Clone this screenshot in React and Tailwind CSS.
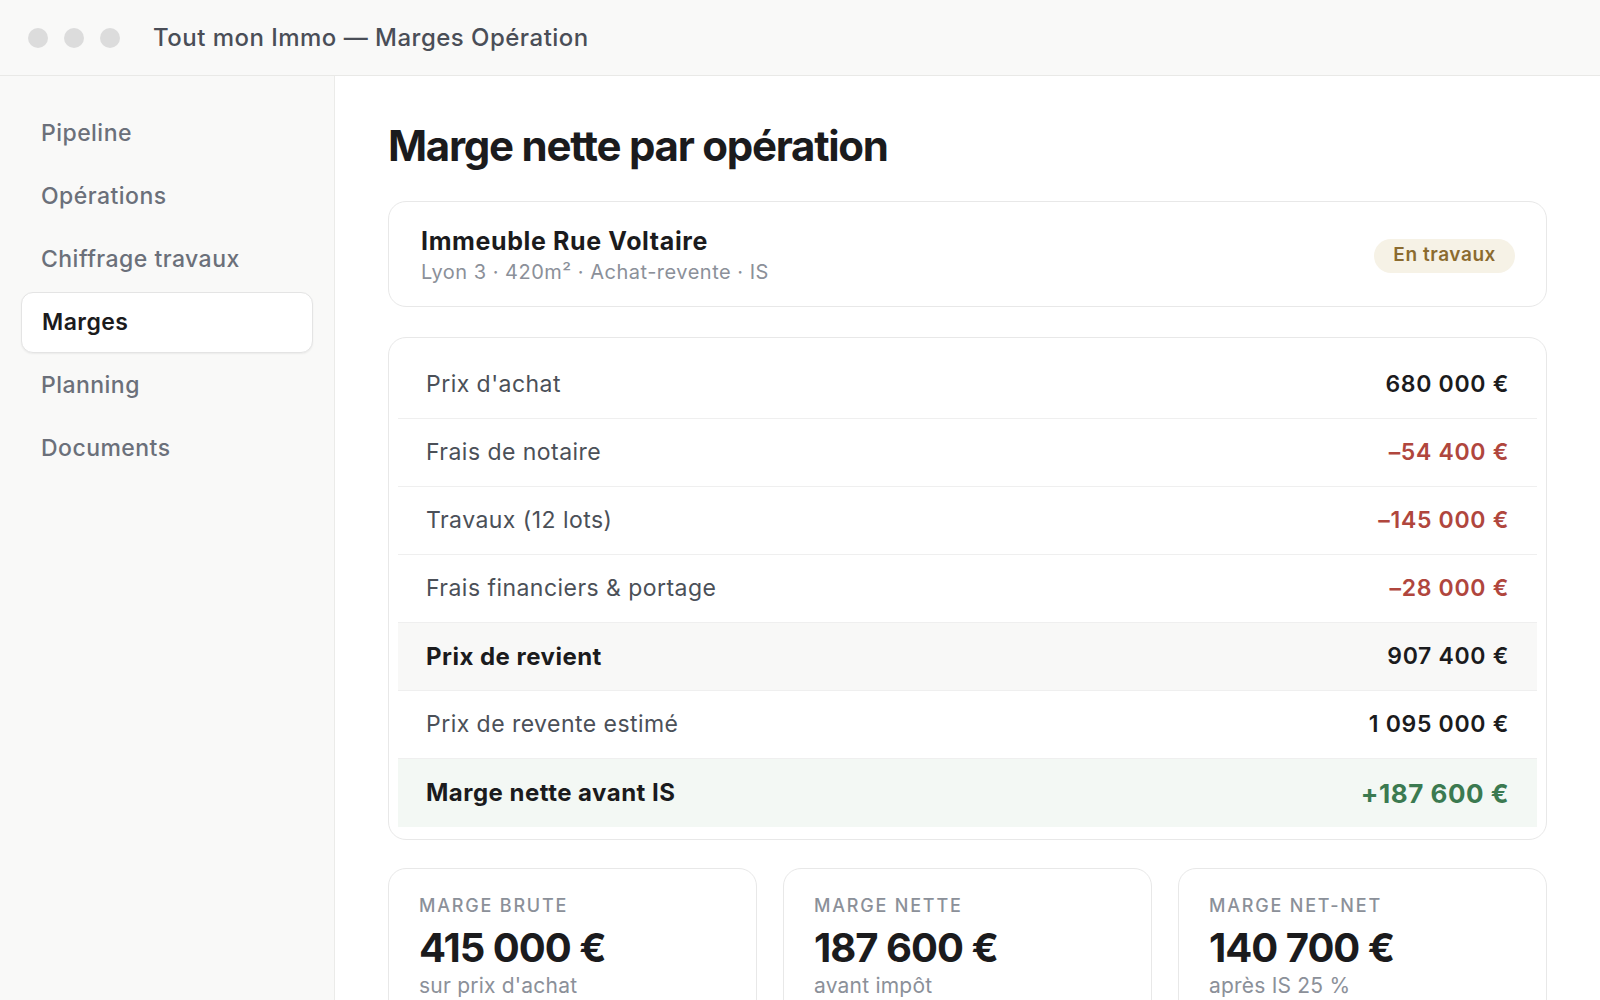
import React from "react";

const nav = ["Pipeline", "Opérations", "Chiffrage travaux", "Marges", "Planning", "Documents"];

const rows = [
  { label: "Prix d'achat", value: "680 000 €", tone: "normal" },
  { label: "Frais de notaire", value: "–54 400 €", tone: "neg" },
  { label: "Travaux (12 lots)", value: "–145 000 €", tone: "neg" },
  { label: "Frais financiers & portage", value: "–28 000 €", tone: "neg" },
  { label: "Prix de revient", value: "907 400 €", tone: "total" },
  { label: "Prix de revente estimé", value: "1 095 000 €", tone: "normal" },
  { label: "Marge nette avant IS", value: "+187 600 €", tone: "result" },
];

const kpis = [
  { label: "Marge brute", value: "415 000 €", sub: "sur prix d'achat" },
  { label: "Marge nette", value: "187 600 €", sub: "avant impôt" },
  { label: "Marge net-net", value: "140 700 €", sub: "après IS 25 %" },
];

export default function App() {
  return (
    <div className="w-[1600px] h-[1000px] overflow-hidden bg-white flex flex-col font-['Inter',sans-serif]">
      <div className="h-[76px] shrink-0 border-b border-[#e9e9e7] bg-[#f9f9f8] flex items-center px-[28px]">
        <div className="flex gap-[16px]">
          <span className="w-5 h-5 rounded-full bg-[#dcdcdc]" />
          <span className="w-5 h-5 rounded-full bg-[#dcdcdc]" />
          <span className="w-5 h-5 rounded-full bg-[#dcdcdc]" />
        </div>
        <div className="ml-[33px] text-[24px] tracking-[0.02em] font-medium text-[#4a4e57]">Tout mon Immo — Marges Opération</div>
      </div>
      <div className="flex flex-1 min-h-0">
        <aside className="w-[335px] shrink-0 bg-[#f9f9f8] border-r border-[#ebebe9] pt-[27px] px-[21px] flex flex-col gap-[2px]">
          {nav.map((n) =>
            n === "Marges" ? (
              <div key={n} className="h-[61px] px-[20px] flex items-center rounded-[12px] bg-white border border-[#e4e4e4] shadow-[0_1px_2px_rgba(0,0,0,0.06)] text-[23px] tracking-[0.02em] font-semibold text-[#1b1b1d]">
                {n}
              </div>
            ) : (
              <div key={n} className="h-[61px] px-[20px] flex items-center text-[23px] tracking-[0.02em] font-medium text-[#6b707a]">
                {n}
              </div>
            )
          )}
        </aside>
        <main className="flex-1 min-w-0 px-[53px] pt-[45px]">
          <h1 className="text-[42px] leading-[50px] font-bold tracking-[-0.03em] text-[#1b1b1d]">Marge nette par opération</h1>
          <div className="mt-[30px] h-[106px] border border-[#e8e8e8] rounded-[18px] pl-[32px] pr-[31px] pt-[3px] flex items-center justify-between">
            <div className="flex flex-col gap-[3px]">
              <div className="text-[25px] leading-[30px] tracking-[0.025em] font-bold text-[#1b1b1d]">Immeuble Rue Voltaire</div>
              <div className="text-[20px] leading-[26px] tracking-[0.025em] text-[#8b9099]">Lyon 3 · 420m² · Achat-revente · IS</div>
            </div>
            <span className="h-[34px] px-[19px] rounded-full bg-[#f6f2e6] text-[#8b6b2f] text-[19px] tracking-[0.03em] font-semibold flex items-center">En travaux</span>
          </div>
          <div className="mt-[30px] border border-[#e8e8e8] rounded-[18px] px-[9px] pt-[13px] pb-[12px]">
            {rows.map((r, i) => {
              const last = i === rows.length - 1;
              const bg = r.tone === "total" ? "bg-[#f8f8f7]" : r.tone === "result" ? "bg-[#f3f8f4]" : "";
              const labelCls =
                r.tone === "total" || r.tone === "result"
                  ? "text-[24px] tracking-[0.02em] font-bold text-[#1b1b1d]"
                  : "text-[23px] tracking-[0.02em] text-[#4b5058]";
              const valueCls =
                r.tone === "neg"
                  ? "text-[23px] tracking-[0.03em] font-semibold text-[#b0463d]"
                  : r.tone === "result"
                  ? "text-[26px] tracking-[0.02em] font-bold text-[#3b7a50]"
                  : "text-[23px] tracking-[0.03em] font-semibold text-[#1b1b1d]";
              return (
                <div key={r.label} className={`h-[68px] pl-[28px] pr-[28px] flex items-center justify-between ${last ? "" : "border-b border-[#efefef]"} ${bg}`}>
                  <span className={labelCls}>{r.label}</span>
                  <span className={valueCls}>{r.value}</span>
                </div>
              );
            })}
          </div>
          <div className="mt-[28px] grid grid-cols-3 gap-[26px]">
            {kpis.map((k) => (
              <div key={k.label} className="h-[200px] border border-[#e8e8e8] rounded-[18px] px-[30px] pt-[25px]">
                <div className="text-[18px] leading-[24px] font-medium uppercase tracking-[0.1em] text-[#8b9099]">{k.label}</div>
                <div className="mt-[6px] text-[40px] leading-[48px] font-bold tracking-[-0.025em] text-[#1b1b1d]">{k.value}</div>
                <div className="text-[21px] leading-[28px] tracking-[0.01em] text-[#8b9099]">{k.sub}</div>
              </div>
            ))}
          </div>
        </main>
      </div>
    </div>
  );
}
